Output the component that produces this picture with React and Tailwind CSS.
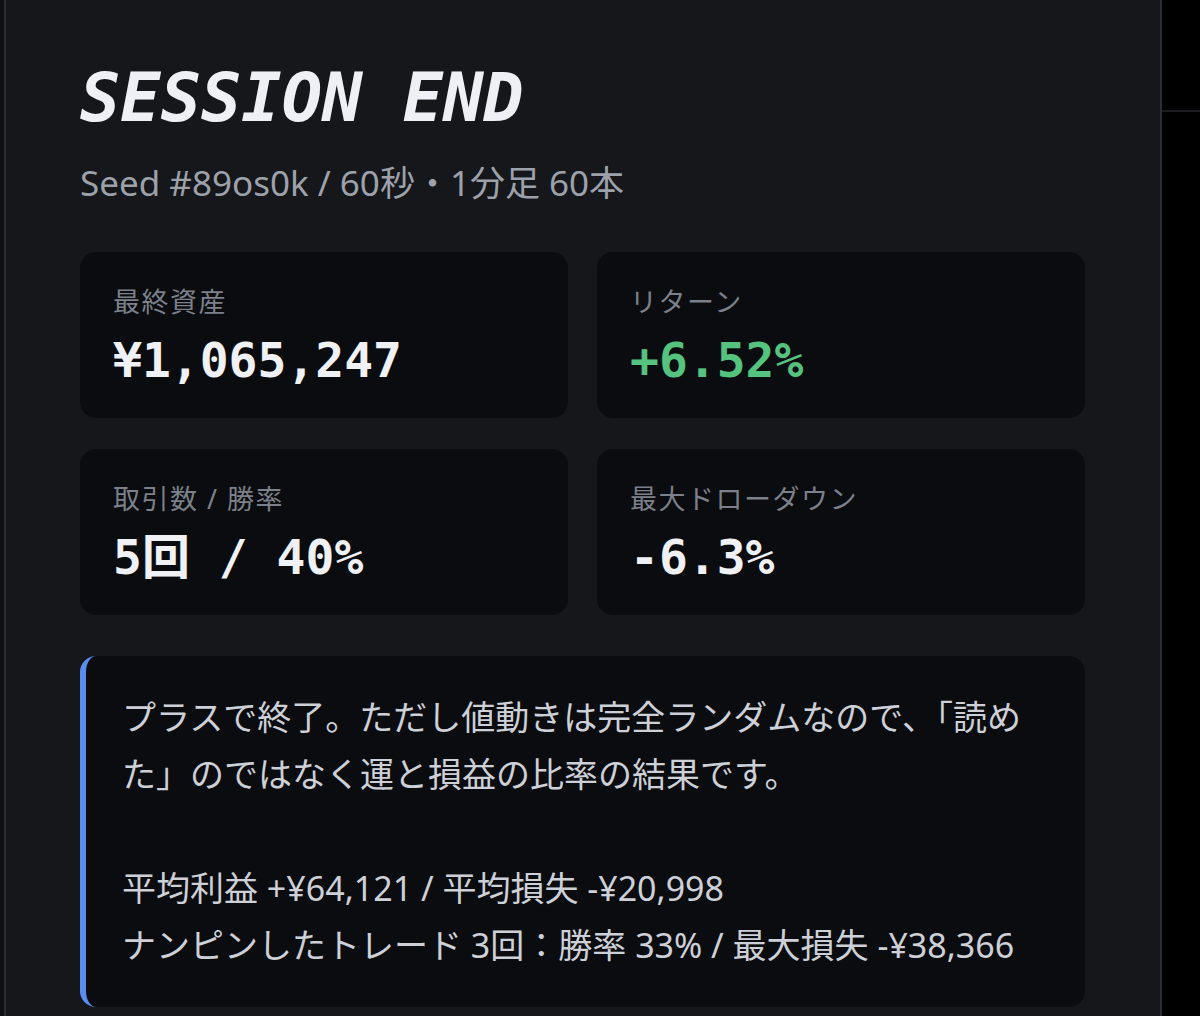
const stats = [
  { label: "最終資産", value: "¥1,065,247" },
  { label: "リターン", value: "+6.52%", tone: "up" },
  { label: "取引数 / 勝率", value: "5回 / 40%" },
  { label: "最大ドローダウン", value: "-6.3%" },
];

const note =
  "プラスで終了。ただし値動きは完全ランダムなので、「読め\nた」のではなく運と損益の比率の結果です。\n\n平均利益 +¥64,121 / 平均損失 -¥20,998\nナンピンしたトレード 3回：勝率 33% / 最大損失 -¥38,366";

const sans = "font-['Noto_Sans','Noto_Sans_CJK_JP',sans-serif]";
const mono = "font-['DejaVu_Sans_Mono','Noto_Sans_CJK_JP',monospace]";

const StatCard = ({ label, value, tone }) => (
  <div className="rounded-[16px] bg-[#0b0c0f] pl-[33px] pt-[30px] pb-[29px]">
    <p className={`${sans} text-[27px] leading-[39px] tracking-[1.5px] text-[#7b808a]`}>
      {label}
    </p>
    <p
      className={`${mono} mt-[10px] text-[48px] leading-[58px] font-bold whitespace-pre ${
        tone === "up" ? "text-[#55c27f]" : "text-[#f0f1f5]"
      }`}
    >
      {value}
    </p>
  </div>
);

export default function App() {
  return (
    <div className="flex h-[1016px] overflow-hidden bg-[#0f1013]">
      <div className="w-[4px] shrink-0" />
      <main className="w-[1158px] shrink-0 border-x-2 border-[#2a2d33] bg-[#15171b] pl-[74px] pt-[65px]">
        <div className="w-[1005px]">
          <h1
            className={`${mono} text-[67px] leading-none font-bold italic text-[#eef0f5]`}
          >
            SESSION END
          </h1>
          <p className={`${sans} mt-[26px] text-[35px] leading-[49px] text-[#9da1aa]`}>
            Seed #89os0k / 60秒・1分足 60本
          </p>

          <div className="mt-[45px] grid grid-cols-2 gap-x-[29px] gap-y-[31px]">
            {stats.map((s) => (
              <StatCard key={s.label} {...s} />
            ))}
          </div>

          <div className="mt-[41px] rounded-[16px] border-l-[6px] border-[#5b8def] bg-[#0b0c0f] pl-[36px] pr-[20px] pt-[33px] pb-[33px]">
            <p
              className={`${sans} whitespace-pre-line text-[34px] leading-[57px] text-[#cdd0d7]`}
            >
              {note}
            </p>
          </div>
        </div>
      </main>
      <div className="flex-1 bg-black">
        <div className="mt-[110px] h-[2px] bg-[#1b1c1f]" />
      </div>
    </div>
  );
}
